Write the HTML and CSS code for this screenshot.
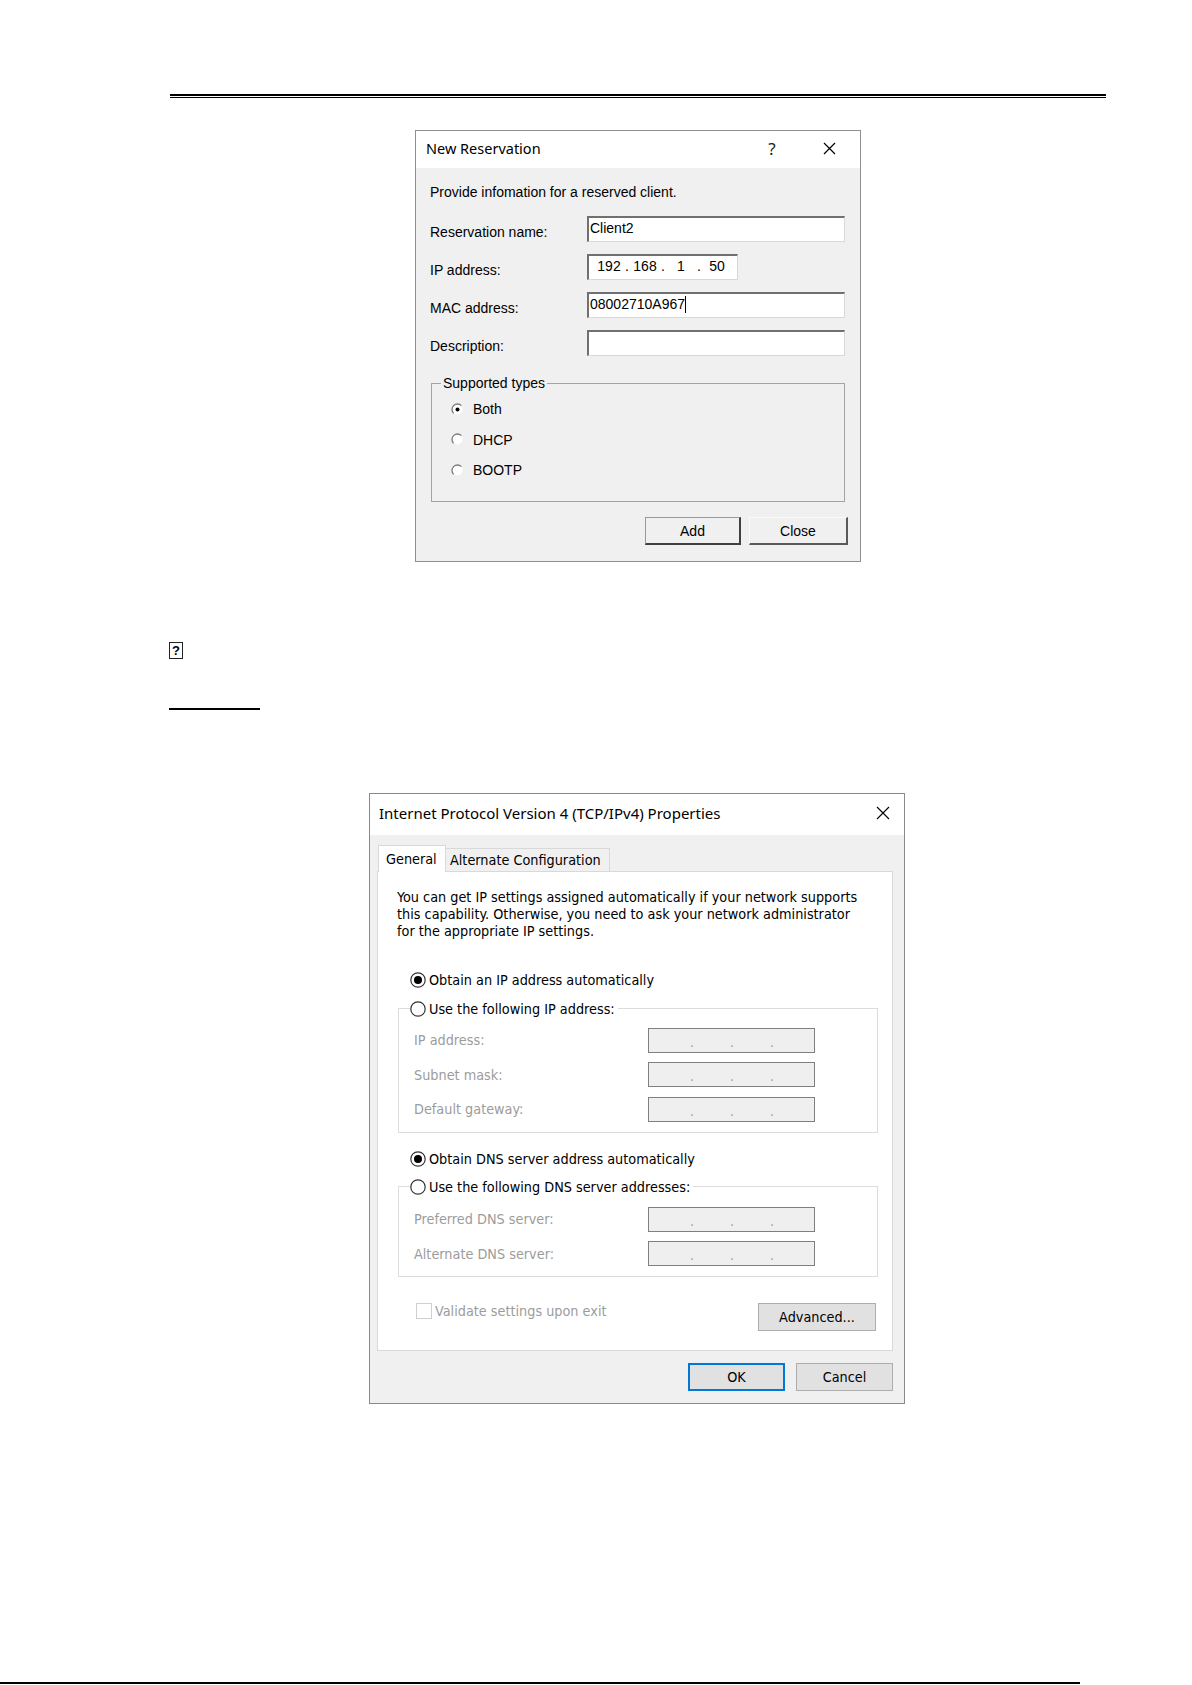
FILE: index.html
```html
<!DOCTYPE html>
<html lang="en">
<head>
<meta charset="utf-8">
<title>DHCP reservation</title>
<link rel="stylesheet" href="styles.css">
</head>
<body>
<div class="page">
  <div class="top-rule"></div>

  <div class="fig fig1">
    <div class="dlg1">
      <div class="tb1">
        <span class="tb1-title">New Reservation</span>
        <span class="tb1-help">?</span>
        <svg class="tb1-close" width="13" height="13" viewBox="0 0 13 13"><path d="M1 1L12 12M12 1L1 12" stroke="#000" stroke-width="1.2" fill="none"/></svg>
      </div>
      <div class="body1">
        <p class="intro">Provide infomation for a reserved client.</p>
        <div class="form1">
          <div class="row1"><label>Reservation name:</label><div class="in1">Client2</div></div>
          <div class="row1"><label>IP address:</label>
            <div class="in1 ip1"><span class="oct">192</span><span class="odot">.</span><span class="oct">168</span><span class="odot">.</span><span class="oct">1</span><span class="odot">.</span><span class="oct">50</span></div>
          </div>
          <div class="row1"><label>MAC address:</label><div class="in1">08002710A967<span class="caret"></span></div></div>
          <div class="row1"><label>Description:</label><div class="in1"></div></div>
        </div>
        <fieldset class="grp1">
          <legend>Supported types</legend>
          <div class="rad1-list">
            <div class="rad1">
              <svg width="13" height="13" viewBox="0 0 13 13"><circle cx="6.5" cy="6.5" r="5" fill="#fff"/><path d="M10.39 2.61A5.5 5.5 0 0 0 2.61 10.39" stroke="#7c7c7c" stroke-width="1.3" fill="none"/><circle cx="6.5" cy="6.5" r="2" fill="#000"/></svg>
              <span>Both</span>
            </div>
            <div class="rad1">
              <svg width="13" height="13" viewBox="0 0 13 13"><circle cx="6.5" cy="6.5" r="5" fill="#fff"/><path d="M10.39 2.61A5.5 5.5 0 0 0 2.61 10.39" stroke="#7c7c7c" stroke-width="1.3" fill="none"/></svg>
              <span>DHCP</span>
            </div>
            <div class="rad1">
              <svg width="13" height="13" viewBox="0 0 13 13"><circle cx="6.5" cy="6.5" r="5" fill="#fff"/><path d="M10.39 2.61A5.5 5.5 0 0 0 2.61 10.39" stroke="#7c7c7c" stroke-width="1.3" fill="none"/></svg>
              <span>BOOTP</span>
            </div>
          </div>
        </fieldset>
        <div class="btns1">
          <button class="btn1 btn1-def">Add</button>
          <button class="btn1 btn1-close">Close</button>
        </div>
      </div>
    </div>
  </div>

  <div class="missing">?</div>
  <div class="uline"></div>

  <div class="fig fig2">
    <div class="dlg2">
      <div class="tb2">
        <span class="tb2-title">Internet Protocol Version 4 (TCP/IPv4) Properties</span>
        <svg class="tb2-close" width="14" height="14" viewBox="0 0 14 14"><path d="M1 1L13 13M13 1L1 13" stroke="#000" stroke-width="1.1" fill="none"/></svg>
      </div>
      <div class="body2">
        <div class="tabs">
          <div class="tab tab-on">General</div>
          <div class="tab tab-off">Alternate Configuration</div>
        </div>
        <div class="panel">
          <p class="para">You can get IP settings assigned automatically if your network supports<br>this capability. Otherwise, you need to ask your network administrator<br>for the appropriate IP settings.</p>

          <div class="opt2 opt-ip">
            <svg class="rad2" width="16" height="16" viewBox="0 0 16 16"><circle cx="8" cy="8" r="7.2" fill="#fff" stroke="#333" stroke-width="1.2"/><circle cx="8" cy="8" r="4" fill="#000"/></svg>
            <span>Obtain an IP address automatically</span>
          </div>
          <fieldset class="grp2">
            <legend>
              <svg class="rad2" width="16" height="16" viewBox="0 0 16 16"><circle cx="8" cy="8" r="7.2" fill="#fff" stroke="#333" stroke-width="1.2"/></svg>
              <span>Use the following IP address:</span>
            </legend>
            <div class="rows2">
              <div class="row2"><span class="lab2">IP address:</span><div class="ipf"><span>.</span><span>.</span><span>.</span></div></div>
              <div class="row2"><span class="lab2">Subnet mask:</span><div class="ipf"><span>.</span><span>.</span><span>.</span></div></div>
              <div class="row2"><span class="lab2">Default gateway:</span><div class="ipf"><span>.</span><span>.</span><span>.</span></div></div>
            </div>
          </fieldset>

          <div class="opt2 opt-dns">
            <svg class="rad2" width="16" height="16" viewBox="0 0 16 16"><circle cx="8" cy="8" r="7.2" fill="#fff" stroke="#333" stroke-width="1.2"/><circle cx="8" cy="8" r="4" fill="#000"/></svg>
            <span>Obtain DNS server address automatically</span>
          </div>
          <fieldset class="grp2 grp-dns">
            <legend>
              <svg class="rad2" width="16" height="16" viewBox="0 0 16 16"><circle cx="8" cy="8" r="7.2" fill="#fff" stroke="#333" stroke-width="1.2"/></svg>
              <span>Use the following DNS server addresses:</span>
            </legend>
            <div class="rows2 rows-dns">
              <div class="row2"><span class="lab2">Preferred DNS server:</span><div class="ipf"><span>.</span><span>.</span><span>.</span></div></div>
              <div class="row2"><span class="lab2">Alternate DNS server:</span><div class="ipf"><span>.</span><span>.</span><span>.</span></div></div>
            </div>
          </fieldset>

          <div class="bottomrow">
            <div class="chk"><span class="chkbox"></span><span class="chktext">Validate settings upon exit</span></div>
            <button class="btn2 btn-adv">Advanced...</button>
          </div>
        </div>
        <div class="btns2">
          <button class="btn2 btn-ok">OK</button>
          <button class="btn2">Cancel</button>
        </div>
      </div>
    </div>
  </div>
</div>
<div class="bottom-rule"></div>
</body>
</html>
```
FILE: styles.css
```css
* { box-sizing: border-box; }
html, body { margin: 0; padding: 0; }
body {
  width: 1192px;
  height: 1685px;
  overflow: hidden;
  background: #fff;
  display: flex;
  flex-direction: column;
  font-family: "Liberation Sans", Arial, sans-serif;
  color: #000;
}
.page { padding-left: 170px; width: 1106px; }
.top-rule {
  margin-top: 94px;
  height: 4px;
  border-top: 2px solid #000;
  border-bottom: 1px solid #000;
}
.fig { display: flex; justify-content: center; }
.fig1 { margin-top: 32px; }

/* ---------- Dialog 1 ---------- */
.dlg1 {
  width: 446px;
  height: 432px;
  border: 1px solid #8f8f8f;
  background: #f0f0f0;
  display: flex;
  flex-direction: column;
}
.tb1 {
  height: 37px;
  background: #fff;
  display: flex;
  align-items: center;
  padding: 0 24px 3px 10px;
  flex-shrink: 0;
}
.tb1-title { font-family: "Noto Sans", sans-serif; font-size: 14.5px; }
.tb1-help { margin-left: auto; width: 12px; text-align: center; font-family: "Noto Sans", sans-serif; font-size: 17px; color: #222; }
.tb1-close { margin-left: 45px; }
.body1 { padding-top: 16px; font-size: 14px; }
.intro { margin: 0 0 0 14px; line-height: 16px; }
.form1 {
  margin-top: 16px;
  padding-left: 14px;
  display: flex;
  flex-direction: column;
  gap: 12px;
}
.row1 { display: flex; align-items: center; height: 26px; }
.row1 label { width: 157px; padding-top: 5px; }
.in1 {
  width: 258px;
  height: 26px;
  background: #fff;
  border-top: 2px solid #707070;
  border-left: 2px solid #707070;
  border-right: 1px solid #d8d8d8;
  border-bottom: 1px solid #d8d8d8;
  padding: 1px 0 0 1px;
  line-height: 19px;
  display: flex;
  align-items: flex-start;
}
.caret { display: inline-block; width: 1px; height: 17px; background: #000; margin-top: 1px; }
.ip1 { width: 151px; padding-left: 4px; }
.oct { width: 32px; text-align: center; }
.odot { width: 4px; text-align: center; }
.grp1 {
  margin: 19px 15px 0 15px;
  padding: 0 0 21px 9px;
  border: 1px solid #a3a3a3;
}
.grp1 legend { padding: 0 2px; line-height: 16px; }
.rad1-list { margin-top: 8px; display: flex; flex-direction: column; gap: 10.5px; }
.rad1 { height: 20px; display: flex; align-items: center; padding-left: 10px; }
.rad1 span { margin-left: 9px; }
.btns1 {
  display: flex;
  justify-content: flex-end;
  gap: 8px;
  margin: 15px 12px 0 0;
}
.btn1 {
  height: 28px;
  font-family: "Liberation Sans", Arial, sans-serif;
  font-size: 14px;
  color: #000;
  background: #f0f0f0;
  padding: 0;
}
.btn1-def {
  width: 96px;
  border-top: 1px solid #9a9a9a;
  border-left: 1px solid #9a9a9a;
  border-right: 2px solid #404040;
  border-bottom: 2px solid #404040;
}
.btn1-close {
  width: 99px;
  border-top: 1px solid #fafafa;
  border-left: 1px solid #fafafa;
  border-right: 2px solid #5a5a5a;
  border-bottom: 2px solid #5a5a5a;
}

/* ---------- Between ---------- */
.missing {
  margin-top: 80px;
  margin-left: -1px;
  width: 14px;
  height: 17px;
  border: 1px solid #222;
  font-family: "Liberation Sans", Arial, sans-serif;
  font-size: 13px;
  font-weight: bold;
  line-height: 15px;
  text-align: center;
}
.uline { margin-top: 49px; margin-left: -1px; width: 91px; height: 2px; background: #000; }
.fig2 { margin-top: 83px; }

/* ---------- Dialog 2 ---------- */
.dlg2 {
  width: 536px;
  height: 611px;
  margin-left: -2px;
  border: 1px solid #8a8a8a;
  background: #f0f0f0;
  display: flex;
  flex-direction: column;
  font-family: "DejaVu Sans Condensed", "DejaVu Sans", sans-serif;
  font-stretch: condensed;
  font-size: 14.3px;
}
.tb2 {
  height: 41px;
  background: #fff;
  display: flex;
  align-items: center;
  padding: 0 14px 3px 9px;
  flex-shrink: 0;
}
.tb2-title { font-family: "Noto Sans", sans-serif; font-stretch: normal; font-size: 15px; }
.tb2-close { margin-left: auto; }
.body2 { padding: 10px 11px 0 7px; display: flex; flex-direction: column; }
.tabs {
  display: flex;
  align-items: flex-end;
  height: 27px;
  padding-left: 1px;
  margin-bottom: -1px;
  position: relative;
  z-index: 1;
}
.tab { display: flex; align-items: center; border: 1px solid #d9d9d9; border-bottom: none; }
.tab-on { width: 68px; height: 27px; background: #fff; padding-left: 7px; }
.tab-off { width: 164px; height: 23px; margin-bottom: 1px; border-left: none; background: #f0f0f0; padding-left: 4px; }
.panel {
  height: 480px;
  background: #fff;
  border: 1px solid #d9d9d9;
  padding: 17px 14px 0 20px;
}
.para { margin: 0 0 0 -1px; line-height: 17.2px; white-space: nowrap; }
.opt2 { height: 18px; display: flex; align-items: center; padding-left: 12px; }
.opt-ip { margin-top: 30px; }
.opt-dns { margin-top: 17px; }
.opt2 span, .grp2 legend span { margin-left: 3px; }
.rad2 { flex-shrink: 0; display: block; }
.grp2 {
  margin: 11px 0 0 0;
  padding: 0 0 10px 11px;
  border: 1px solid #dcdcdc;
  min-width: 0;
}
.grp-dns { margin-top: 10px; }
.grp2 legend { padding: 0 3px 0 0; height: 18px; display: flex; align-items: center; }
.rows2 { margin-top: 10px; display: flex; flex-direction: column; gap: 9.5px; }
.rows-dns { margin-top: 11px; }
.row2 { height: 25px; display: flex; align-items: center; padding-left: 4px; }
.lab2 { width: 234px; color: #9c9c9c; }
.ipf {
  width: 167px;
  height: 25px;
  background: #efefef;
  border: 1px solid #7f7f7f;
  display: flex;
  padding: 4px 0 0 41px;
  color: #a0a0a0;
  line-height: 18px;
}
.ipf span { width: 40px; }
.bottomrow {
  margin-top: 26px;
  display: flex;
  justify-content: space-between;
  align-items: flex-start;
  padding: 0 2px 0 18px;
}
.chk { display: flex; align-items: center; height: 16px; }
.chkbox { width: 16px; height: 16px; border: 1px solid #cfcfcf; background: #fff; }
.chktext { margin-left: 3px; color: #9c9c9c; }
.btn2 {
  height: 28px;
  width: 97px;
  background: #e1e1e1;
  border: 1px solid #adadad;
  font-family: "DejaVu Sans Condensed", "DejaVu Sans", sans-serif;
  font-stretch: condensed;
  font-size: 14.3px;
  color: #000;
  padding: 0;
}
.btn-adv { width: 118px; }
.btns2 { margin-top: 12px; display: flex; justify-content: flex-end; gap: 11px; }
.btn-ok { border: 1px solid #0078d7; box-shadow: inset 0 0 0 1px #0078d7; }

.bottom-rule { margin-top: auto; margin-bottom: 1px; width: 1080px; height: 2px; background: #000; flex-shrink: 0; }
```
